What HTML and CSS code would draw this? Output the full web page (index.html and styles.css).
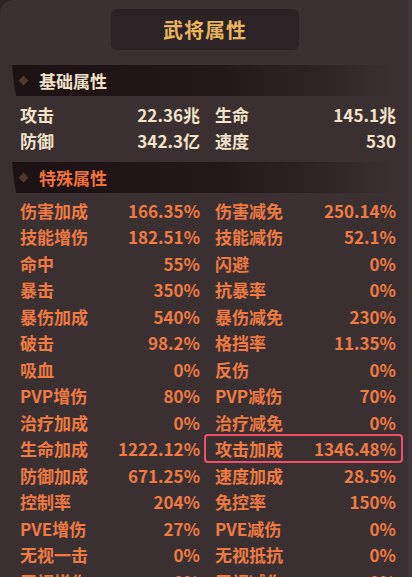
FILE: index.html
```html
<!DOCTYPE html>
<html lang="zh">
<head>
<meta charset="utf-8">
<link rel="stylesheet" href="styles.css">
</head>
<body>
<div class="panel">
  <div class="title-wrap"><div class="title">武将属性</div></div>

  <div class="section-head"><span class="diamond"></span><span class="head-text base">基础属性</span></div>
  <div class="rows base-rows">
    <div class="row"><div class="cell"><span>攻击</span><span>22.36兆</span></div><div class="cell"><span>生命</span><span>145.1兆</span></div></div>
    <div class="row"><div class="cell"><span>防御</span><span>342.3亿</span></div><div class="cell"><span>速度</span><span>530</span></div></div>
  </div>

  <div class="section-head"><span class="diamond"></span><span class="head-text special">特殊属性</span></div>
  <div class="rows special-rows">
    <div class="row"><div class="cell"><span>伤害加成</span><span>166.35%</span></div><div class="cell"><span>伤害减免</span><span>250.14%</span></div></div>
    <div class="row"><div class="cell"><span>技能增伤</span><span>182.51%</span></div><div class="cell"><span>技能减伤</span><span>52.1%</span></div></div>
    <div class="row"><div class="cell"><span>命中</span><span>55%</span></div><div class="cell"><span>闪避</span><span>0%</span></div></div>
    <div class="row"><div class="cell"><span>暴击</span><span>350%</span></div><div class="cell"><span>抗暴率</span><span>0%</span></div></div>
    <div class="row"><div class="cell"><span>暴伤加成</span><span>540%</span></div><div class="cell"><span>暴伤减免</span><span>230%</span></div></div>
    <div class="row"><div class="cell"><span>破击</span><span>98.2%</span></div><div class="cell"><span>格挡率</span><span>11.35%</span></div></div>
    <div class="row"><div class="cell"><span>吸血</span><span>0%</span></div><div class="cell"><span>反伤</span><span>0%</span></div></div>
    <div class="row"><div class="cell"><span>PVP增伤</span><span>80%</span></div><div class="cell"><span>PVP减伤</span><span>70%</span></div></div>
    <div class="row"><div class="cell"><span>治疗加成</span><span>0%</span></div><div class="cell"><span>治疗减免</span><span>0%</span></div></div>
    <div class="row"><div class="cell"><span>生命加成</span><span>1222.12%</span></div><div class="cell highlight"><span>攻击加成</span><span>1346.48%</span></div></div>
    <div class="row"><div class="cell"><span>防御加成</span><span>671.25%</span></div><div class="cell"><span>速度加成</span><span>28.5%</span></div></div>
    <div class="row"><div class="cell"><span>控制率</span><span>204%</span></div><div class="cell"><span>免控率</span><span>150%</span></div></div>
    <div class="row"><div class="cell"><span>PVE增伤</span><span>27%</span></div><div class="cell"><span>PVE减伤</span><span>0%</span></div></div>
    <div class="row"><div class="cell"><span>无视一击</span><span>0%</span></div><div class="cell"><span>无视抵抗</span><span>0%</span></div></div>
    <div class="row"><div class="cell"><span>无视增伤</span><span>0%</span></div><div class="cell"><span>无视减伤</span><span>0%</span></div></div>
  </div>
</div>
</body>
</html>
```

FILE: styles.css
```css
html, body {
  margin: 0;
  padding: 0;
  background: #2c2426;
  overflow: hidden;
}
body {
  width: 412px;
  height: 577px;
  font-family: "Noto Sans CJK SC", "Noto Sans", sans-serif;
}
.panel {
  height: 600px;
  background: #3a3032;
  border-top-left-radius: 14px;
  border-right: 4px solid #413739;
  box-sizing: border-box;
  padding-top: 9px;
}
.title-wrap {
  display: flex;
  justify-content: center;
  margin-left: 2px;
}
.title {
  width: 188px;
  height: 41px;
  background: #2b2326;
  border-radius: 6px;
  color: #eab45c;
  font-size: 20px;
  font-weight: 700;
  display: flex;
  align-items: center;
  justify-content: center;
  letter-spacing: 1px;
}
.section-head {
  margin-left: 12px;
  width: 378px;
  height: 31px;
  background: linear-gradient(90deg, #1c1113 0%, #231819 55%, #2f2628 85%, rgba(58,48,50,0) 100%);
  display: flex;
  align-items: center;
  clip-path: polygon(0 0, 100% 0, 100% 100%, 4px 100%, 2px 60%);
}
.title-wrap + .section-head { margin-top: 15px; }
.diamond {
  width: 7px;
  height: 7px;
  background: #4d3a2b;
  transform: rotate(45deg);
  margin-left: 8px;
}
.head-text {
  margin-left: 12px;
  font-size: 17px;
  font-weight: 700;
  line-height: 1;
}
.head-text.base { color: #efe1c8; }
.head-text.special { color: #f0733c; }
.rows {
  padding-left: 20px;
  display: flex;
  flex-direction: column;
}
.base-rows {
  padding-top: 5px;
  padding-bottom: 9px;
  color: #f1e3c9;
}
.base-rows .row { height: 26px; }
.special-rows {
  padding-top: 4px;
  color: #ef7a42;
}
.special-rows .row { height: 26.5px; }
.row {
  display: flex;
  gap: 15px;
  align-items: center;
}
.cell {
  display: flex;
  justify-content: space-between;
  align-items: center;
  width: 180px;
  font-size: 17px;
  font-weight: 700;
  line-height: 1;
  position: relative;
}
.cell + .cell { width: 181px; }
.highlight::before {
  content: "";
  position: absolute;
  left: -11px;
  right: -7px;
  top: -6px;
  bottom: -6px;
  border: 2px solid #f2506a;
  border-radius: 4px;
}
```
